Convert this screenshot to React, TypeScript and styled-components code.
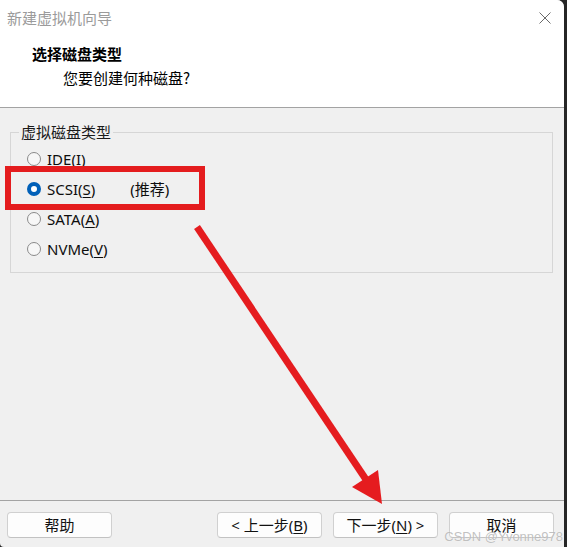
import React from "react";
import styled, { createGlobalStyle } from "styled-components";

const GlobalStyle = createGlobalStyle`
  html, body {
    margin: 0;
    padding: 0;
    background: #262626;
  }
  body {
    font-family: "Noto Sans", "Noto Sans CJK SC", sans-serif;
    -webkit-font-smoothing: antialiased;
  }
`;

const Window = styled.div`
  position: relative;
  width: 564px;
  height: 547px;
  background: #f0f0f0;
  border-top-right-radius: 7px;
  border-bottom-left-radius: 4px;
  overflow: hidden;
  display: flex;
  flex-direction: column;
  color: #1a1a1a;
  font-size: 15px;
`;

const TitleBar = styled.div`
  height: 36px;
  flex: none;
  background: #ffffff;
  display: flex;
  align-items: center;
  justify-content: space-between;
  padding: 0 13px 0 7px;
`;

const TitleText = styled.span`
  font-family: "Noto Sans CJK SC", sans-serif;
  font-size: 15px;
  line-height: 20px;
  color: #9b9b9b;
`;

const CloseButton = styled.span`
  display: flex;
  width: 12px;
  height: 12px;
`;

const Header = styled.div`
  flex: none;
  height: 72px;
  box-sizing: border-box;
  background: #ffffff;
  border-bottom: 1px solid #a3a3a3;
  padding: 8px 0 0 32px;
  display: flex;
  flex-direction: column;
  gap: 4px;
`;

const HeaderTitle = styled.div`
  font-family: "Noto Sans CJK SC", sans-serif;
  font-weight: 700;
  font-size: 15px;
  line-height: 20px;
  color: #000;
`;

const HeaderSub = styled.div`
  font-family: "Noto Sans CJK SC", sans-serif;
  font-size: 15px;
  line-height: 20px;
  color: #000;
  padding-left: 31px;
`;

const Content = styled.div`
  flex: 1;
  padding: 14px 11px 0 10px;
`;

const GroupBox = styled.fieldset`
  margin: 0;
  height: 151px;
  box-sizing: border-box;
  border: 1px solid #d6d6d6;
  padding: 2px 0 0 16px;
  display: flex;
  flex-direction: column;
`;

const Legend = styled.legend`
  font-family: "Noto Sans CJK SC", sans-serif;
  font-size: 15px;
  line-height: 20px;
  padding: 0 2px;
  margin-left: -8px;
  color: #1a1a1a;
`;

const RadioRow = styled.label`
  height: 30px;
  display: flex;
  align-items: center;
  gap: 6px;
  font-size: 15px;
  line-height: 20px;
  color: #0d0d0d;
`;

const RadioCircle = styled.span<{ $checked?: boolean }>`
  width: 14px;
  height: 14px;
  box-sizing: border-box;
  border-radius: 50%;
  border: ${(p) => (p.$checked ? "4.5px solid #0160b8" : "1px solid #8a8a8a")};
  background: ${(p) => (p.$checked ? "#ffffff" : "#f7f7f7")};
  flex: none;
`;

const Mnemonic = styled.u`
  text-underline-offset: 2px;
  text-decoration-thickness: 1px;
`;

const Recommend = styled.span`
  margin-left: 35px;
`;

const Footer = styled.div`
  flex: none;
  height: 47px;
  box-sizing: border-box;
  border-top: 1px solid #a3a3a3;
  display: flex;
  align-items: flex-start;
  padding: 11px 10px 0 7px;
  gap: 11px;
`;

const Spacer = styled.div`
  flex: 1;
`;

const Button = styled.button`
  width: 105px;
  height: 26px;
  background: #fdfdfd;
  border: 1px solid #d0d0d0;
  border-bottom-color: #c2c2c2;
  border-radius: 4px;
  font-family: "Noto Sans", "Noto Sans CJK SC", sans-serif;
  font-size: 15px;
  line-height: 20px;
  color: #111;
  padding: 0;
  display: flex;
  align-items: center;
  justify-content: center;
`;

const AnnotationBox = styled.div`
  position: absolute;
  left: 5px;
  top: 166px;
  width: 200px;
  height: 44px;
  box-sizing: border-box;
  border: 6.5px solid #e41c1e;
  pointer-events: none;
`;

const ArrowLayer = styled.svg`
  position: absolute;
  left: 0;
  top: 0;
  pointer-events: none;
`;

const Watermark = styled.div`
  position: absolute;
  right: 1px;
  top: 530px;
  font-family: "Liberation Sans", sans-serif;
  font-size: 13px;
  line-height: 13px;
  color: rgba(140, 140, 140, 0.55);
  text-shadow: 0 0 1px rgba(255, 255, 255, 0.9);
  pointer-events: none;
`;

const radios = [
  { label: "IDE", key: "I" },
  { label: "SCSI", key: "S", checked: true, extra: "(推荐)" },
  { label: "SATA", key: "A" },
  { label: "NVMe", key: "V" },
];

export default function App() {
  return (
    <>
      <GlobalStyle />
      <Window>
        <TitleBar>
          <TitleText>新建虚拟机向导</TitleText>
          <CloseButton>
            <svg width="12" height="12" viewBox="0 0 12 12">
              <path d="M0.5 0.5 L11.5 11.5 M11.5 0.5 L0.5 11.5" stroke="#6a6a6a" strokeWidth="1" fill="none" />
            </svg>
          </CloseButton>
        </TitleBar>
        <Header>
          <HeaderTitle>选择磁盘类型</HeaderTitle>
          <HeaderSub>您要创建何种磁盘?</HeaderSub>
        </Header>
        <Content>
          <GroupBox>
            <Legend>虚拟磁盘类型</Legend>
            {radios.map((r) => (
              <RadioRow key={r.label}>
                <RadioCircle $checked={r.checked} />
                <span>
                  {r.label}(<Mnemonic>{r.key}</Mnemonic>)
                  {r.extra && <Recommend>{r.extra}</Recommend>}
                </span>
              </RadioRow>
            ))}
          </GroupBox>
        </Content>
        <Footer>
          <Button>帮助</Button>
          <Spacer />
          <Button>
            &lt; 上一步(<Mnemonic>B</Mnemonic>)
          </Button>
          <Button>
            下一步(<Mnemonic>N</Mnemonic>) &gt;
          </Button>
          <Button>取消</Button>
        </Footer>
        <AnnotationBox />
        <ArrowLayer width="564" height="547" viewBox="0 0 564 547">
          <line x1="197" y1="227" x2="369" y2="484" stroke="#e51c1f" strokeWidth="7" />
          <polygon points="382,504 352,487 378,470" fill="#e51c1f" />
        </ArrowLayer>
        <Watermark>CSDN @Yvonne978</Watermark>
      </Window>
    </>
  );
}
